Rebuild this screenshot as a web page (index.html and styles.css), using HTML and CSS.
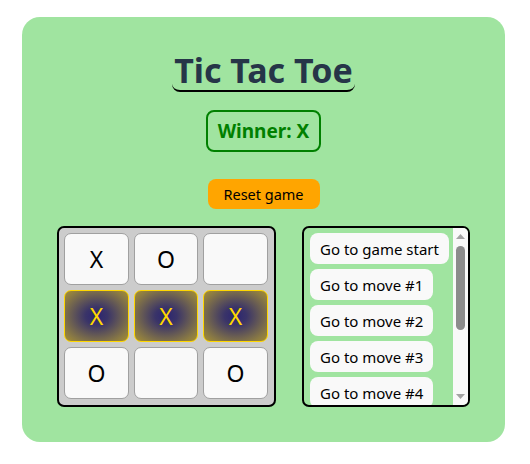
FILE: index.html
```html
<!DOCTYPE html>
<html>
<head>
<meta charset="utf-8">
<link rel="stylesheet" href="styles.css">
</head>
<body>
<div class="game">
  <h1 class="title">Tic Tac Toe</h1>
  <div class="status">Winner: X</div>
  <button class="reset">Reset game</button>
  <div class="play">
    <div class="board">
      <button class="cell">X</button>
      <button class="cell">O</button>
      <button class="cell"></button>
      <button class="cell win">X</button>
      <button class="cell win">X</button>
      <button class="cell win">X</button>
      <button class="cell">O</button>
      <button class="cell"></button>
      <button class="cell">O</button>
    </div>
    <div class="history">
      <ol class="moves">
        <li><button class="move">Go to game start</button></li>
        <li><button class="move">Go to move #1</button></li>
        <li><button class="move">Go to move #2</button></li>
        <li><button class="move">Go to move #3</button></li>
        <li><button class="move">Go to move #4</button></li>
        <li><button class="move">Go to move #5</button></li>
      </ol>
      <div class="scrollbar">
        <svg class="arrow" width="15" height="15" viewBox="0 0 15 15"><polygon points="3,11 7.5,6 12,11" fill="#a3a3a3"/></svg>
        <div class="thumb"></div>
        <svg class="arrow down" width="15" height="15" viewBox="0 0 15 15"><polygon points="3,4 7.5,9 12,4" fill="#a3a3a3"/></svg>
      </div>
    </div>
  </div>
</div>
</body>
</html>
```
FILE: styles.css
```css
html, body {
  margin: 0;
  padding: 0;
  background: #ffffff;
}
body {
  padding: 17px 25px 0 22px;
  font-family: "Noto Sans", "Open Sans", sans-serif;
}
.game {
  width: 483px;
  height: 425px;
  box-sizing: border-box;
  background: #a0e4a0;
  border-radius: 18px;
  display: flex;
  flex-direction: column;
  align-items: center;
  padding-top: 33px;
}
.title {
  margin: 0;
  font-size: 34px;
  line-height: 40px;
  font-weight: 700;
  color: #263548;
  border-bottom: 2px solid #000;
  border-radius: 0 0 8px 8px;
  padding: 0 2px;
}
.status {
  margin-top: 18px;
  border: 2px solid #008000;
  border-radius: 8px;
  color: #008000;
  font-weight: 700;
  font-size: 19px;
  height: 42px;
  box-sizing: border-box;
  display: flex;
  align-items: center;
  padding: 0 10px;
}
.reset {
  margin-top: 27px;
  height: 30px;
  width: 112px;
  border: none;
  background: #ffa500;
  border-radius: 8px;
  font-family: inherit;
  font-size: 14.5px;
  color: #000;
  padding: 0;
}
.play {
  margin-top: 17px;
  display: flex;
  gap: 26px;
}
.board {
  width: 219px;
  height: 181px;
  box-sizing: border-box;
  border: 2px solid #000;
  border-radius: 7px;
  background: #cccccc;
  padding: 5px;
  display: grid;
  grid-template-columns: 65px 64px 65px;
  grid-template-rows: 52px 52px 52px;
  gap: 5px 5px;
}
.cell {
  margin: 0;
  padding: 0;
  background: #f9f9f9;
  border: 1px solid #a0a0a0;
  border-radius: 7px;
  font-family: inherit;
  font-size: 23px;
  color: #000;
}
.cell.win {
  background: radial-gradient(ellipse at center, #2b2571 0%, #3a3468 25%, #8a7a44 80%, #a89030 100%);
  border: 1px solid #ffd700;
  color: #ffd700;
}
.history {
  width: 168px;
  height: 181px;
  box-sizing: border-box;
  border: 2px solid #000;
  border-radius: 7px;
  overflow: hidden;
  display: flex;
}
.moves {
  list-style: none;
  margin: 0;
  flex: 1;
  min-width: 0;
  padding: 5px 0 0 6px;
  overflow: hidden;
  display: flex;
  flex-direction: column;
  gap: 5px;
}
.moves li {
  display: block;
  flex: none;
}
.move {
  height: 31px;
  border: none;
  background: #f9f9f9;
  border-radius: 8px;
  font-family: inherit;
  font-size: 15px;
  color: #000;
  padding: 0 10px;
  white-space: nowrap;
}
.scrollbar {
  width: 15px;
  flex: none;
  background: #f9f9f9;
  display: flex;
  flex-direction: column;
  align-items: center;
}
.arrow {
  display: block;
  flex: none;
}
.arrow.down {
  margin-top: auto;
}
.thumb {
  margin-top: 3px;
  width: 9px;
  height: 84px;
  border-radius: 5px;
  background: #8c8c8c;
}
```
